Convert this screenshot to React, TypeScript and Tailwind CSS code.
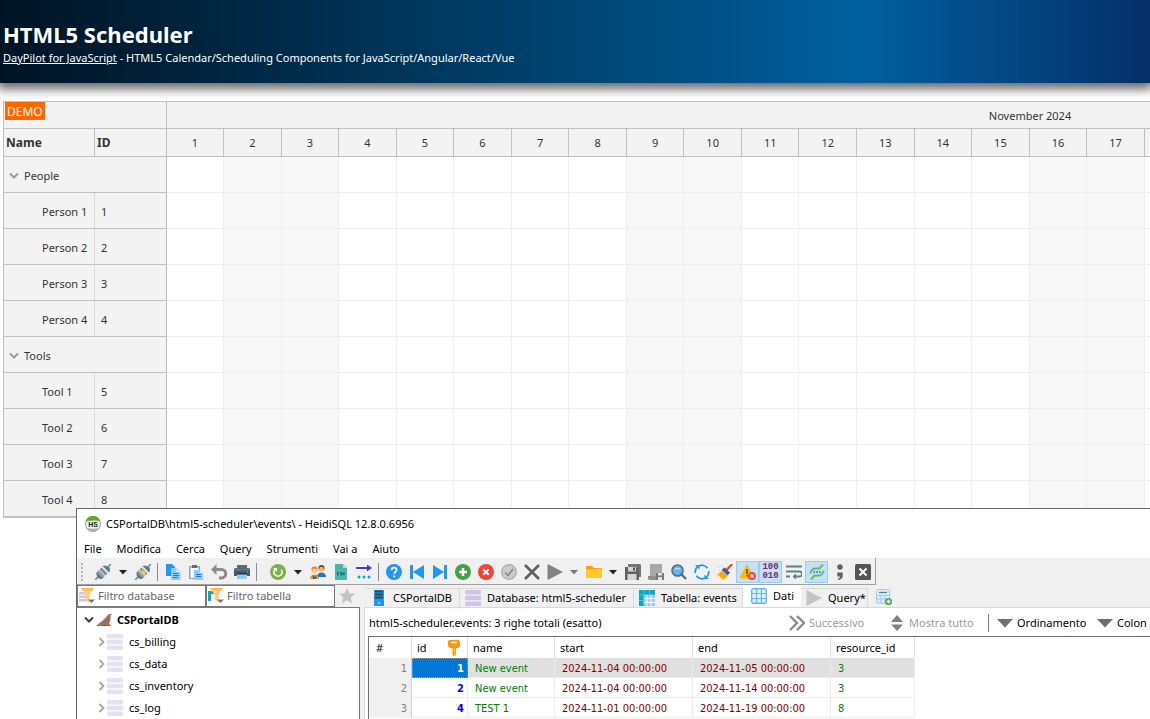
import React from 'react';

const WEEKEND = [2, 3, 9, 10, 16, 17, 23, 24, 30];
const DAYS = Array.from({ length: 30 }, (_, i) => i + 1);
const LAST_LOADED_DAY = 17;

const GROUPS = [
  {
    name: 'People',
    items: [
      { id: 1, name: 'Person 1' },
      { id: 2, name: 'Person 2' },
      { id: 3, name: 'Person 3' },
      { id: 4, name: 'Person 4' },
    ],
  },
  {
    name: 'Tools',
    items: [
      { id: 5, name: 'Tool 1' },
      { id: 6, name: 'Tool 2' },
      { id: 7, name: 'Tool 3' },
      { id: 8, name: 'Tool 4' },
    ],
  },
];

const EVENTS = [
  { id: 1, name: 'New event', start: '2024-11-04 00:00:00', end: '2024-11-05 00:00:00', resource: 3 },
  { id: 2, name: 'New event', start: '2024-11-04 00:00:00', end: '2024-11-14 00:00:00', resource: 3 },
  { id: 4, name: 'TEST 1', start: '2024-11-01 00:00:00', end: '2024-11-19 00:00:00', resource: 8 },
];

const Svg = ({ children }: { children: React.ReactNode }) => (
  <svg width="16" height="16" viewBox="0 0 16 16" className="shrink-0" aria-hidden="true">
    {children}
  </svg>
);

const PlugIcon = ({ spark = false }: { spark?: boolean }) => (
  <Svg>
    <path d="M0 16l4-4M12 4l4-4" stroke="#78909c" strokeWidth="1.600" />
    <path d="M2 7.500l6.500 6.500c-1.800 1.500-4 1.300-5.300 0S.7 9.500 2 7.500z" fill="#607d8b" />
    <path d="M4 6l6 6-1.800 1.800-6-6z" fill="#90a4ae" />
    <path d="M7.500 2l6.500 6.500c1.500-1.800 1.300-4 0-5.300S9.500.7 7.500 2z" fill="#607d8b" />
    <path d="M6.500 3.500l6 6-2 2-6-6z" fill="#78909c" />
    {spark && <path d="M5 6.500l2.500.6L7 5l2 2.500 2-.7-.8 2.200 1.300 1.500-2.400-.4L8.500 12l-.6-2.400L5 9.500l1.500-1.200z" fill="#ffca28" />}
  </Svg>
);

const CopyIcon = () => (
  <Svg>
    <path d="M1 0h6l3 3v9H1z" fill="#2196f3" />
    <path d="M6 4h6l3.500 3.500V16H6z" fill="#90caf9" />
    <path d="M11.500 4l4 4h-4z" fill="#e3f2fd" />
    <path d="M8 9.500h5M8 11.500h6M8 13.500h5" stroke="#1976d2" />
  </Svg>
);

const PasteIcon = () => (
  <Svg>
    <path d="M1 2h11v13H1z" fill="#90a4ae" />
    <path d="M2.500 3.500h8V14h-8z" fill="#fff" />
    <path d="M4 1h5v3H4z" fill="#546e7a" />
    <path d="M6 6h6l3 3v7H6z" fill="#90caf9" />
    <path d="M12 6l3 3h-3z" fill="#e3f2fd" />
    <path d="M8 10.500h5M8 12.500h5" stroke="#1976d2" />
  </Svg>
);

const UndoIcon = () => (
  <Svg>
    <path d="M5.500 0v11L0 5.500z" fill="#8c8c8c" />
    <path d="M4 5.500h6.500a4.200 4.200 0 010 8.500H8" fill="none" stroke="#8c8c8c" strokeWidth="3" />
  </Svg>
);

const PrinterIcon = () => (
  <Svg>
    <path d="M3 1h10v4H3z" fill="#546e7a" />
    <path d="M0 5.500a1.500 1.500 0 011.500-1.500h13A1.500 1.500 0 0116 5.500V12H0z" fill="#455a64" />
    <path d="M1 4.500h14v2H1z" fill="#607d8b" />
    <path d="M3 9h10v6H3z" fill="#90caf9" />
    <path d="M3 9h10v1.500H3z" fill="#263238" />
    <circle cx="13.500" cy="8" r=".8" fill="#00e676" />
  </Svg>
);

const RefreshIcon = () => (
  <Svg>
    <circle cx="8" cy="8" r="8" fill="#7cb342" />
    <path d="M4.800 5.600a4 4 0 106.400 0" fill="none" stroke="#fff" strokeWidth="1.500" />
    <path d="M3 4h4v4z" fill="#fff" />
  </Svg>
);

const UsersIcon = () => (
  <Svg>
    <circle cx="11.500" cy="4" r="3" fill="#5d4037" />
    <circle cx="11.500" cy="5.200" r="2.400" fill="#ffb74d" />
    <path d="M7 13c0-3 2-4.500 4.500-4.500S16 10 16 13z" fill="#1976d2" />
    <circle cx="4.500" cy="5.500" r="3" fill="#ff7043" />
    <circle cx="4.500" cy="7" r="2.400" fill="#ffcc80" />
    <path d="M0 15c0-3 2-4.500 4.500-4.500S9 12 9 15z" fill="#ff9800" />
    <path d="M2.500 10.700l2 2.300 2-2.300-.5 4.300h-3z" fill="#1565c0" />
  </Svg>
);

const CsvIcon = () => (
  <Svg>
    <path d="M2 0h8l4 4v12H2z" fill="#4db6ac" />
    <path d="M10 0l4 4h-4z" fill="#b2dfdb" />
    <path d="M6 8.500H4.500v2.500H6M9 8.500H7.500v1.200H9V11H7.500M10 8.500l.8 2.500.8-2.500" fill="none" stroke="#00695c" strokeWidth=".9" />
  </Svg>
);

const ArrowsIcon = () => (
  <Svg>
    <path d="M0 4h11" stroke="#3f3fbf" strokeWidth="2" />
    <path d="M11 .5L16 4l-5 3.500z" fill="#3f3fbf" />
    <circle cx="3" cy="13" r="1.500" fill="#00acc1" />
    <circle cx="8" cy="13" r="1.500" fill="#00acc1" />
    <circle cx="13" cy="13" r="1.500" fill="#00acc1" />
  </Svg>
);

const HelpIcon = () => (
  <Svg>
    <circle cx="8" cy="8" r="8" fill="#2196f3" />
    <path d="M5.500 6.200c0-1.500 1-2.600 2.600-2.600s2.500 1 2.500 2.300c0 1.800-2.300 2-2.300 3.900" fill="none" stroke="#fff" strokeWidth="1.700" />
    <circle cx="8.200" cy="12.300" r="1.100" fill="#fff" />
  </Svg>
);

const FirstIcon = () => (
  <Svg>
    <path d="M1 1h3v14H1zM15 1v14L4 8z" fill="#2196f3" />
  </Svg>
);

const LastIcon = () => (
  <Svg>
    <path d="M12 1h3v14h-3zM1 1v14l11-7z" fill="#2196f3" />
  </Svg>
);

const PlusIcon = () => (
  <Svg>
    <circle cx="8" cy="8" r="8" fill="#43a047" />
    <path d="M8 4v8M4 8h8" stroke="#fff" strokeWidth="2.500" />
  </Svg>
);

const RemoveIcon = () => (
  <Svg>
    <circle cx="8" cy="8" r="8" fill="#f44336" />
    <path d="M5.200 5.200l5.600 5.600M10.800 5.200l-5.600 5.600" stroke="#fff" strokeWidth="2" />
  </Svg>
);

const CheckIcon = () => (
  <Svg>
    <circle cx="8" cy="8" r="7.300" fill="#ccc" stroke="#a9a9a9" strokeWidth="1.200" />
    <path d="M4 8.500l3 3L12 5" fill="none" stroke="#888" strokeWidth="1.600" />
  </Svg>
);

const CancelIcon = () => (
  <Svg>
    <path d="M1 1l14 14M15 1L1 15" stroke="#606060" strokeWidth="2.800" />
  </Svg>
);

const PlayIcon = ({ color = '#828282' }: { color?: string }) => (
  <Svg>
    <path d="M.5 0v16L16 8z" fill={color} />
  </Svg>
);

const FolderIcon = () => (
  <Svg>
    <path d="M0 3a1 1 0 011-1h5l2 2h7a1 1 0 011 1v8a1 1 0 01-1 1H1a1 1 0 01-1-1z" fill="#ffa000" />
    <path d="M0 6a1 1 0 011-1h14a1 1 0 011 1v7a1 1 0 01-1 1H1a1 1 0 01-1-1z" fill="#ffca28" />
  </Svg>
);

const SaveAllIcon = () => (
  <Svg>
    <path d="M3 0h12l1 1v12h-3L3 3z" fill="#757575" />
    <path d="M0 3h12l2 2v11H0z" fill="#616161" />
    <path d="M3 3h8v4.500H3zM2.500 10h9v6h-9z" fill="#d6d6d6" />
    <path d="M8 3.500h2v3H8z" fill="#555" />
  </Svg>
);

const SnippetIcon = () => (
  <Svg>
    <path d="M2 0h12v12H2z" fill="#a8a8a8" />
    <path d="M0 12h8v4H2a2 2 0 01-2-2z" fill="#8d8d8d" />
    <path d="M8 9h8v7H8z" fill="#777" />
    <path d="M10 9h4v2.500h-4zM10 13h4v3h-4z" fill="#e0e0e0" />
  </Svg>
);

const SearchIcon = () => (
  <Svg>
    <path d="M10 10l5 5" stroke="#546e7a" strokeWidth="2.400" />
    <circle cx="6.500" cy="6.500" r="5.500" fill="#64b5f6" stroke="#546e7a" strokeWidth="1.600" />
    <path d="M4 5.500a3.500 3.500 0 015 0" fill="none" stroke="#bbdefb" strokeWidth="1.200" />
  </Svg>
);

const ReplaceIcon = () => (
  <Svg>
    <path d="M5 1.900A6.800 6.800 0 0113.600 4.200M14.700 7a6.800 6.800 0 01-2.500 6.400" fill="none" stroke="#2196f3" strokeWidth="1.700" />
    <path d="M11 14.100a6.800 6.800 0 01-8.600-2.300M1.300 9a6.800 6.800 0 012.500-6.400" fill="none" stroke="#2196f3" strokeWidth="1.700" />
    <path d="M1 1h4.500v4.500zM15 15h-4.500v-4.500z" fill="#2196f3" />
  </Svg>
);

const BroomIcon = () => (
  <Svg>
    <path d="M15.200 0L9 6.500" stroke="#e65100" strokeWidth="2.200" />
    <path d="M7.500 3.500l5.500 5-2.500 3-6-5.500z" fill="#3f51b5" />
    <path d="M5 6l5.500 5.500c-.8 2-2.500 3.700-4.500 4.500L0 10c2-.4 3.800-2 5-4z" fill="#ffb300" />
    <path d="M3 9l4 5M4.500 8.500l4 4" stroke="#f57c00" strokeWidth=".7" />
    <path d="M1 3h1M4 2h1M2 6h1" stroke="#90caf9" />
  </Svg>
);

const WarningIcon = () => (
  <Svg>
    <path d="M7 1L0 14h14z" fill="#ffc107" stroke="#ffb300" strokeLinejoin="round" />
    <path d="M7 5v5M7 11v1.500" stroke="#5d4037" strokeWidth="1.500" />
    <circle cx="12" cy="12" r="4" fill="#f44336" />
    <path d="M10.300 10.300l3.400 3.400M13.700 10.300l-3.400 3.400" stroke="#fff" strokeWidth="1.200" />
  </Svg>
);

const WrapIcon = () => (
  <Svg>
    <path d="M0 2.500h16M0 7.500h13.500a2.500 2.500 0 010 5H9M0 12.500h4" fill="none" stroke="#607d8b" strokeWidth="1.800" />
    <path d="M10 9.500v6l-3.500-3z" fill="#607d8b" />
  </Svg>
);

const ReformatIcon = () => (
  <Svg>
    <path d="M1 9.500C2.500 6 4 4.500 6 4.500h4.500L14 .5M15 6.500c-1.500 3.500-3 5-5 5H5.500L2 15.500" fill="none" stroke="#66bb6a" strokeWidth="1.900" />
    <path d="M4.500 8h1.500M7.300 8h1.500M10 8h1.500" stroke="#1565c0" strokeWidth="1.500" />
  </Svg>
);

const SemicolonIcon = () => (
  <Svg>
    <circle cx="8" cy="3" r="2.700" fill="#616161" />
    <path d="M5.300 8.500h5.400V12c0 2.200-1.700 3.700-4.700 4v-1.500c1.300-.3 2-1 2-2H5.300z" fill="#616161" />
  </Svg>
);

const CloseBoxIcon = () => (
  <Svg>
    <rect width="16" height="16" rx="1.500" fill="#555" />
    <path d="M4.500 4.500l7 7M11.500 4.500l-7 7" stroke="#fff" strokeWidth="2" />
  </Svg>
);

const DatabaseIcon = ({ color = '#d1c4e9' }: { color?: string }) => (
  <Svg>
    <rect x="0" y="0" width="16" height="4.500" rx="1" fill={color} />
    <rect x="0" y="5.700" width="16" height="4.500" rx="1" fill={color} />
    <rect x="0" y="11.400" width="16" height="4.500" rx="1" fill={color} />
  </Svg>
);

const ServerIcon = () => (
  <Svg>
    <path d="M3 0h10v16H3z" fill="#2196f3" />
    <path d="M4 1.500h8M4 4.500h8M4 7.500h8" stroke="#37474f" strokeWidth="2" />
    <path d="M7 13h2" stroke="#bbdefb" strokeWidth="1.500" />
  </Svg>
);

const TableIcon = () => (
  <Svg>
    <path d="M0 0h16v16H0z" fill="#90caf9" />
    <path d="M8 5v11M12 5v11M5 8.500h11M5 12.300h11" stroke="#fff" />
    <path d="M0 0h16v4.500H4.500V16H0z" fill="#00acc1" />
    <path d="M5 0v4.500M10.500 0v4.500M0 5h4.500M0 10.500h4.500" stroke="#80deea" strokeWidth=".6" />
  </Svg>
);

const GridIcon = () => (
  <Svg>
    <rect x=".7" y=".7" width="14.600" height="14.600" rx="1.500" fill="#e3f2fd" stroke="#64b5f6" strokeWidth="1.400" />
    <path d="M1 5.500h14M1 10.500h14M5.500 1v14M10.500 1v14" stroke="#64b5f6" strokeWidth="1.200" />
  </Svg>
);

const AddTabIcon = () => (
  <Svg>
    <rect x=".6" y=".6" width="13" height="13.500" rx="1" fill="#e3f2fd" stroke="#90caf9" />
    <path d="M3 3.500h8" stroke="#607d8b" strokeWidth="1.400" />
    <path d="M1 6.500h12M1 10h12M5 6v8M9 6v8" stroke="#90caf9" />
    <circle cx="12.500" cy="12.500" r="3.500" fill="#43a047" />
    <path d="M12.500 10.500v4M10.500 12.500h4" stroke="#fff" strokeWidth="1.500" />
  </Svg>
);

const FilterIcon = ({ table = false }: { table?: boolean }) => (
  <Svg>
    {table ? (
      <path d="M0 3h9v3H3v7H0z" fill="#00acc1" />
    ) : (
      <path d="M0 4h8v2.500H0zM0 7.500h8V10H0zM0 11h8v2.500H0z" fill="#d1c4e9" />
    )}
    <path d="M2 0h13l-4.500 6.500v8l-4-3v-5z" fill="#ffcc80" />
    <path d="M2 0h13l-1.500 2.300h-10z" fill="#ffb74d" />
    <path d="M9 11.500h7L12.500 15z" fill="#757575" />
  </Svg>
);

const KeyIcon = () => (
  <Svg>
    <path d="M3 0h10l1 2v4l-1.500 2H10v6.500L8.500 16h-1L6.500 15V8h-3L2 6V2z" fill="#ff9800" />
    <path d="M5 2.500h6" stroke="#fff3e0" strokeWidth="1.500" />
    <path d="M8.500 8v7" stroke="#ffcc80" />
  </Svg>
);

const SealIcon = () => (
  <Svg>
    <path d="M0 13.500c2-1 3.500-2.500 5.500-4C8 7.500 9.500 6 11 4c.8-1.200 1.800-2 3-2l2 .2-1.600 1.600c.5 3-.2 5.700-1.400 7.700L15.500 14H11l-.5-1.500c-2 .8-4 .7-5.500.7L2 14.500z" fill="#a1705c" />
    <path d="M5 13.200c2 0 4-.2 5.500-.7L11 14H4z" fill="#6d4c41" />
  </Svg>
);

const StarIcon = () => (
  <Svg>
    <path d="M8 0l2.300 5.300 5.700.5-4.300 3.800 1.300 5.900-5-3.200-5 3.200 1.300-5.900L0 5.800l5.700-.5z" fill="#c4c4c4" />
  </Svg>
);

const HeidiIcon = () => (
  <Svg>
    <circle cx="8" cy="8" r="7.500" fill="#eceff1" stroke="#9e9e9e" />
    <path d="M.8 5.500a7.500 7.500 0 0114.400 0c-4-1.200-10-1.200-14.400 0z" fill="#5fa82a" />
    <path d="M1.500 12a7.500 7.500 0 0013 0c-4 1-9 1-13 0z" fill="#b0b0b0" />
    <text x="8" y="11" textAnchor="middle" fontSize="7" fontWeight="bold" fontFamily="Liberation Sans, sans-serif" fill="#1b1b1b">HS</text>
  </Svg>
);

const Chevron = ({ color = '#999' }: { color?: string }) => (
  <svg width="10" height="8" viewBox="0 0 10 8" className="shrink-0" aria-hidden="true">
    <path d="M1 1.500l4 4 4-4" fill="none" stroke={color} strokeWidth="2" />
  </svg>
);

const NextIcon = () => (
  <Svg>
    <path d="M1 1l7 7-7 7M8 1l7 7-7 7" fill="none" stroke="#8a8a8a" strokeWidth="2.300" />
  </Svg>
);

const ShowAllIcon = () => (
  <Svg>
    <path d="M8 0l6 7H2zM8 16l6-6.500H2z" fill="#808080" />
  </Svg>
);

const SortIcon = () => (
  <Svg>
    <path d="M0 4h16l-8 8.500z" fill="#6e6e6e" />
  </Svg>
);

const ToolButton = ({ label, active = false, children }: { label: string; active?: boolean; children: React.ReactNode }) => (
  <button
    aria-label={label}
    className={`flex h-[22px] w-[23px] shrink-0 items-center justify-center ${active ? 'border border-[#99cdf5] bg-[#c4e0f5]' : ''}`}
  >
    {children}
  </button>
);

const DropButton = ({ label, color = '#222', wide = false }: { label: string; color?: string; wide?: boolean }) => (
  <button aria-label={label} className={`flex h-[22px] shrink-0 items-center justify-center ${wide ? 'w-[17px] pl-px' : 'w-4'}`}>
    <svg width="8" height="8" viewBox="0 0 8 8" aria-hidden="true">
      <path d="M0 2h8L4 6.500z" fill={color} />
    </svg>
  </button>
);

const Divider = () => <div className="mx-[3px] h-[18px] w-px shrink-0 bg-[#8a8a8a]" />;

const Toolbar = () => (
  <div className="flex h-[27px] bg-[#f0f0f0]">
    <div className="flex items-center border-r border-b border-[#a0a0a0] pt-0.5 pr-px">
      <div className="mr-2 ml-1 h-[18px] border-l-2 border-dotted border-[#b5b5b5]" />
      <ToolButton label="Connetti"><PlugIcon /></ToolButton>
      <DropButton label="Sessioni" wide />
      <ToolButton label="Disconnetti"><PlugIcon spark /></ToolButton>
      <Divider />
      <ToolButton label="Copia"><CopyIcon /></ToolButton>
      <ToolButton label="Incolla"><PasteIcon /></ToolButton>
      <ToolButton label="Annulla"><UndoIcon /></ToolButton>
      <ToolButton label="Stampa"><PrinterIcon /></ToolButton>
      <Divider />
      <div className="ml-1.5 flex">
        <ToolButton label="Aggiorna"><RefreshIcon /></ToolButton>
        <DropButton label="Opzioni aggiornamento" wide />
      </div>
      <ToolButton label="Utenti"><UsersIcon /></ToolButton>
      <ToolButton label="Esporta CSV"><CsvIcon /></ToolButton>
      <ToolButton label="Esporta database"><ArrowsIcon /></ToolButton>
      <Divider />
      <ToolButton label="Guida"><HelpIcon /></ToolButton>
      <ToolButton label="Primo"><FirstIcon /></ToolButton>
      <ToolButton label="Ultimo"><LastIcon /></ToolButton>
      <ToolButton label="Inserisci"><PlusIcon /></ToolButton>
      <ToolButton label="Elimina"><RemoveIcon /></ToolButton>
      <ToolButton label="Salva riga"><CheckIcon /></ToolButton>
      <ToolButton label="Annulla modifiche"><CancelIcon /></ToolButton>
      <ToolButton label="Esegui"><PlayIcon /></ToolButton>
      <DropButton label="Opzioni esecuzione" color="#777" />
      <ToolButton label="Apri"><FolderIcon /></ToolButton>
      <DropButton label="File recenti" />
      <ToolButton label="Salva"><SaveAllIcon /></ToolButton>
      <ToolButton label="Salva frammento"><SnippetIcon /></ToolButton>
      <ToolButton label="Trova"><SearchIcon /></ToolButton>
      <ToolButton label="Sostituisci"><ReplaceIcon /></ToolButton>
      <ToolButton label="Pulisci"><BroomIcon /></ToolButton>
      <ToolButton label="Ferma su errori" active><WarningIcon /></ToolButton>
      <button className="flex h-[22px] w-[23px] shrink-0 flex-col items-center justify-center border border-[#99cdf5] bg-[#c4e0f5] font-['Liberation_Mono',monospace] text-[9px] leading-[9px] font-bold text-[#7b1f6a]">
        <span>100</span>
        <span>010</span>
      </button>
      <ToolButton label="A capo"><WrapIcon /></ToolButton>
      <ToolButton label="Riformatta" active><ReformatIcon /></ToolButton>
      <ToolButton label="Delimitatore"><SemicolonIcon /></ToolButton>
      <ToolButton label="Chiudi scheda"><CloseBoxIcon /></ToolButton>
    </div>
  </div>
);

const DayCells = () => (
  <>
    {DAYS.map((d) => (
      <td key={d} className={`border-r border-b border-[#eee] p-0 ${WEEKEND.includes(d) ? 'bg-[#f8f8f8]' : 'bg-white'}`} />
    ))}
  </>
);

const Scheduler = () => (
  <div className="ml-[3px] overflow-hidden border-t border-b border-l border-[#c0c0c0]">
    <table className="w-[1889px] table-fixed border-separate border-spacing-0 text-[11px] leading-4 text-[#333]">
      <colgroup>
        <col className="w-[91px]" />
        <col className="w-[72px]" />
        {DAYS.map((d) => (
          <col key={d} className={d === 1 ? 'w-[57px]' : undefined} />
        ))}
      </colgroup>
      <thead className="bg-[#f3f3f3]">
        <tr className="h-[27px]">
          <th colSpan={2} className="border-r border-b border-[#c0c0c0] p-0 text-left align-top font-normal">
            <span className="ml-px inline-block bg-[#ff6600] px-0.5 pt-0.5 text-[12px] text-white">DEMO</span>
          </th>
          <th colSpan={30} className="border-b border-[#c0c0c0] p-0 pt-0.5 text-center font-normal">November 2024</th>
        </tr>
        <tr className="h-7">
          <th className="border-r border-b border-[#c0c0c0] p-0 pl-0.5 text-left text-[12px]">Name</th>
          <th className="border-r border-b border-[#c0c0c0] p-0 pl-0.5 text-left text-[12px]">ID</th>
          {DAYS.map((d) => (
            <th key={d} className="border-r border-b border-[#c0c0c0] p-0 text-center font-normal">
              {d <= LAST_LOADED_DAY ? d : null}
            </th>
          ))}
        </tr>
      </thead>
      <tbody>
        {GROUPS.map((g) => (
          <React.Fragment key={g.name}>
            <tr className="h-9">
              <td colSpan={2} className="border-r border-b border-[#c0c0c0] bg-[#f3f3f3] p-0 pt-0.5">
                <button className="flex items-center gap-[5px] pl-[5px]">
                  <Chevron />
                  {g.name}
                </button>
              </td>
              <DayCells />
            </tr>
            {g.items.map((r) => (
              <tr key={r.id} className="h-9">
                <td className="border-r border-b border-r-[#dcdcdc] border-b-[#c0c0c0] bg-[#f3f3f3] p-0 pt-0.5 pl-[38px] whitespace-nowrap">{r.name}</td>
                <td className="border-r border-b border-[#c0c0c0] bg-[#f3f3f3] p-0 pt-0.5 pl-1.5">{r.id}</td>
                <DayCells />
              </tr>
            ))}
          </React.Fragment>
        ))}
      </tbody>
    </table>
  </div>
);

const FilterBox = ({ id, label, table = false }: { id: string; label: string; table?: boolean }) => (
  <div className="flex h-[22px] w-[129px] items-center border border-[#7a7a7a] bg-white pl-px">
    <label htmlFor={id} aria-label={label}>
      <FilterIcon table={table} />
    </label>
    <input
      id={id}
      placeholder={label}
      className="w-full min-w-0 pl-[3px] text-[11px] leading-4 outline-none placeholder:text-[#666]"
    />
  </div>
);

const Sidebar = () => (
  <div className="flex w-[283px] shrink-0 flex-col">
    <div className="flex">
      <FilterBox id="filter-db" label="Filtro database" />
      <FilterBox id="filter-table" label="Filtro tabella" table />
      <button aria-label="Preferiti" className="flex w-6 items-center justify-center">
        <StarIcon />
      </button>
    </div>
    <ul className="flex-1 border-t border-r border-[#7a7a7a] bg-white pt-px">
      <li className="flex h-[22px] items-center pl-[7px] font-bold">
        <Chevron color="#404040" />
        <span className="mr-[5px] ml-0.5"><SealIcon /></span>
        CSPortalDB
      </li>
      {['cs_billing', 'cs_data', 'cs_inventory', 'cs_log'].map((db) => (
        <li key={db} className="flex h-[22px] items-center pl-[21px]">
          <svg width="8" height="10" viewBox="0 0 8 10" className="mr-px" aria-hidden="true">
            <path d="M1.500 1l4 4-4 4" fill="none" stroke="#a6a6a6" strokeWidth="1.800" />
          </svg>
          <span className="mr-1.5"><DatabaseIcon color="#e6e0f3" /></span>
          {db}
        </li>
      ))}
    </ul>
  </div>
);

const TABS = [
  { label: 'CSPortalDB', icon: <ServerIcon />, width: 'w-[94px]' },
  { label: 'Database: html5-scheduler', icon: <DatabaseIcon />, width: 'w-[174px]' },
  { label: 'Tabella: events', icon: <TableIcon />, width: 'w-[109px]' },
  { label: 'Dati', icon: <GridIcon />, width: 'w-[58px]', active: true },
  { label: 'Query*', icon: <PlayIcon color="#c4c4c4" />, width: 'w-[67px]' },
];

const TabBar = () => (
  <div className="flex h-[22px] items-end pl-0.5">
    {TABS.map((t) => (
      <button
        key={t.label}
        className={`flex shrink-0 items-center gap-1.5 whitespace-nowrap ${t.width} ${
          t.active ? 'h-[22px] bg-white pb-px pl-2' : 'h-[19px] border-t border-r border-[#d9d9d9] pl-[5px]'
        }`}
      >
        {t.icon}
        {t.label}
      </button>
    ))}
    <button aria-label="Nuova scheda query" className="flex h-5 w-8 items-center justify-center">
      <AddTabIcon />
    </button>
  </div>
);

const DataGrid = () => (
  <div className="ml-[3px] flex-1 border-t border-l border-[#6e6e6e]">
    <table className="w-[546px] table-fixed border-separate border-spacing-0 font-['DejaVu_Sans_Condensed','DejaVu_Sans',sans-serif] text-[11px] leading-4">
      <colgroup>
        <col className="w-[43px]" />
        <col className="w-14" />
        <col className="w-[87px]" />
        <col className="w-[138px]" />
        <col className="w-[138px]" />
        <col className="w-[84px]" />
      </colgroup>
      <thead className="font-['Noto_Sans',sans-serif]">
        <tr className="h-[21px]">
          <th className="border-r border-[#e0e0e0] p-0 pl-[7px] text-left font-normal">#</th>
          <th className="border-r border-[#e0e0e0] p-0 px-[5px] text-left font-normal">
            <div className="flex items-center justify-between">
              id
              <KeyIcon />
            </div>
          </th>
          {['name', 'start', 'end', 'resource_id'].map((h) => (
            <th key={h} className="border-r border-[#e0e0e0] p-0 pl-[5px] text-left font-normal">{h}</th>
          ))}
        </tr>
      </thead>
      <tbody>
        {EVENTS.map((e, i) => (
          <tr key={e.id} className={`h-5 ${i === 0 ? 'bg-[#e0e0e0]' : 'bg-white'}`}>
            <td className="border-r border-[#c8d0dc] bg-[#f0f0f0] p-0 pt-0.5 pr-1 text-right text-[#808080]">{i + 1}</td>
            <td
              className={`p-0 pt-0.5 pr-[3px] text-right font-bold ${
                i === 0 ? 'border border-dotted border-[#ff8728] bg-[#0078d7] text-white' : 'border-r border-b border-[#ececec] text-[#0000f0]'
              }`}
            >
              {e.id}
            </td>
            <td className="border-r border-b border-[#ececec] p-0 pt-0.5 pl-[7px] text-[#008000]">{e.name}</td>
            <td className="border-r border-b border-[#ececec] p-0 pt-0.5 pl-[7px] text-[#800000]">{e.start}</td>
            <td className="border-r border-b border-[#ececec] p-0 pt-0.5 pl-[7px] text-[#800000]">{e.end}</td>
            <td className="border-r border-b border-[#ececec] p-0 pt-0.5 pl-[7px] text-[#008000]">{e.resource}</td>
          </tr>
        ))}
      </tbody>
    </table>
  </div>
);

const DataPanel = () => (
  <div className="ml-1 flex min-w-0 flex-1 flex-col">
    <TabBar />
    <div className="flex flex-1 flex-col border-t border-l border-[#d9d9d9] bg-white">
      <div className="flex h-7 shrink-0 items-center overflow-hidden pt-0.5 pl-1 whitespace-nowrap">
        <span className="w-[420px] shrink-0">html5-scheduler.events: 3 righe totali (esatto)</span>
        <button disabled className="mr-5 flex w-20 shrink-0 items-center gap-1 text-[#9c9c9c]">
          <NextIcon />
          Successivo
        </button>
        <button disabled className="flex w-[88px] shrink-0 items-center gap-1 text-[#9c9c9c]">
          <ShowAllIcon />
          Mostra tutto
        </button>
        <div className="mx-2 ml-[11px] h-[18px] w-px shrink-0 bg-[#808080]" />
        <button className="mr-[7px] flex w-[93px] shrink-0 items-center gap-1">
          <SortIcon />
          Ordinamento
        </button>
        <button className="flex shrink-0 items-center gap-1">
          <SortIcon />
          Colon
        </button>
      </div>
      <DataGrid />
    </div>
  </div>
);

const HeidiWindow = () => (
  <div className="absolute top-[508px] right-0 bottom-0 left-[76px] flex flex-col overflow-hidden border-t border-l border-[#666] bg-white text-[11px] leading-4 text-black">
    <div className="flex h-[29px] shrink-0 items-center gap-[5px] pl-2">
      <HeidiIcon />
      <span>CSPortalDB\html5-scheduler\events\ - HeidiSQL 12.8.0.6956</span>
    </div>
    <nav className="flex h-5 shrink-0 items-center gap-[15px] pt-0.5 pl-[7px]">
      {['File', 'Modifica', 'Cerca', 'Query', 'Strumenti', 'Vai a', 'Aiuto'].map((m) => (
        <button key={m}>{m}</button>
      ))}
    </nav>
    <Toolbar />
    <div className="flex min-h-0 flex-1 bg-[#f0f0f0]">
      <Sidebar />
      <DataPanel />
    </div>
  </div>
);

const App = () => (
  <div className="relative h-screen overflow-hidden bg-white font-['Noto_Sans',sans-serif]">
    <header className="mb-[18px] h-[83px] bg-linear-to-r from-[#001424] via-[#00609f] via-75% to-[#052f68] px-[3px] pt-[21px] text-white shadow-[0_3px_10px_3px_rgba(0,0,0,0.6)]">
      <h1 className="text-[22px] leading-[27px] font-bold">HTML5 Scheduler</h1>
      <p className="text-[11px] leading-5">
        <a href="#" className="underline">DayPilot for JavaScript</a> - HTML5 Calendar/Scheduling Components for JavaScript/Angular/React/Vue
      </p>
    </header>
    <Scheduler />
    <HeidiWindow />
  </div>
);

export default App;
